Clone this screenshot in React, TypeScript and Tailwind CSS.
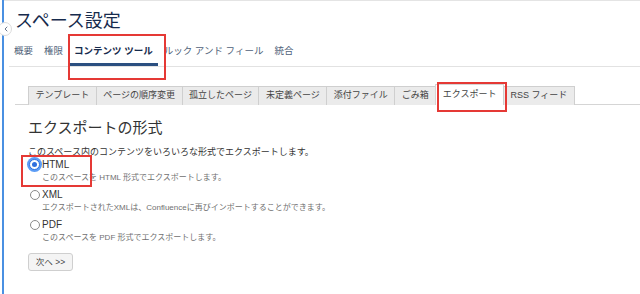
import { ChevronLeft } from "lucide-react"

const navItems = ["概要", "権限", "コンテンツ ツール", "ルック アンド フィール", "統合"]
const subTabs = ["テンプレート", "ページの順序変更", "孤立したページ", "未定義ページ", "添付ファイル", "ごみ箱", "エクスポート", "RSS フィード"]

const options = [
  { label: "HTML", desc: "このスペースを HTML 形式でエクスポートします。", checked: true },
  { label: "XML", desc: "エクスポートされたXMLは、Confluenceに再びインポートすることができます。", checked: false },
  { label: "PDF", desc: "このスペースを PDF 形式でエクスポートします。", checked: false },
]

function Radio({ checked }: { checked: boolean }) {
  if (checked) {
    return (
      <span className="flex h-[11px] w-[11px] items-center justify-center rounded-full border border-[#2f6fde] bg-white ring-2 ring-[#5b9cf5]">
        <span className="h-[5px] w-[5px] rounded-full bg-[#2f6fde]" />
      </span>
    )
  }
  return <span className="block h-[10px] w-[10px] rounded-full border border-[#8a8a8a] bg-white" />
}

export default function App() {
  return (
    <div className="relative flex h-[294px] w-[640px] overflow-hidden bg-white font-['Liberation_Sans','Noto_Sans_CJK_JP',sans-serif] text-[#333]">
      <div className="w-[2px] shrink-0" />
      <div className="w-[2px] shrink-0 bg-[#4a90e2]" />
      <div className="flex-1 border-t border-[#e4e4e4] pl-[11px] pt-[9px]">
        <h1 className="text-[18px] leading-[22px] text-[#172b4d]">スペース設定</h1>

        <div className="mt-[4px] flex gap-[1px] border-b border-[#e2e2e2] -ml-[6px]">
          {navItems.map((item) => {
            const active = item === "コンテンツ ツール"
            return (
              <div
                key={item}
                className={`flex h-[30px] items-center border-b-[3px] px-[5px] pt-[3px] text-[9.5px] ${
                  active ? "border-[#2b4f80] font-bold text-[#172b4d]" : "border-transparent text-[#505f79]"
                }`}
              >
                {item}
              </div>
            )
          })}
        </div>

        <div className="mt-[17px] flex items-end border-b border-[#d5d5d5] pl-[13px]">
          {subTabs.map((tab, i) => {
            const active = tab === "エクスポート"
            return (
              <div
                key={tab}
                className={`-mb-px flex items-center border border-b-0 px-[6.5px] text-[9px] text-[#444] ${
                  i > 0 ? "-ml-px" : ""
                } ${active ? "h-[21px] border-[#d5d5d5] bg-white" : "h-[19px] border-[#cfcfcf] bg-[#ebebeb]"}`}
              >
                {tab}
              </div>
            )
          })}
        </div>

        <div className="pl-[13px]">
          <h2 className="mt-[13px] text-[15px] leading-[20px] text-[#333]">エクスポートの形式</h2>
          <p className="mt-[8px] text-[9px] leading-[12px] text-[#333]">
            このスペース内のコンテンツをいろいろな形式でエクスポートします。
          </p>

          <div className="flex flex-col">
            {options.map((o) => (
              <div key={o.label} className="flex h-[30px] items-start">
                <div className="flex h-[13px] w-[13px] items-center justify-center">
                  <Radio checked={o.checked} />
                </div>
                <div className="ml-[1px] flex flex-col">
                  <span className="text-[10px] leading-[13px] text-[#333]">{o.label}</span>
                  <span className="text-[8px] leading-[13px] text-[#707070]">{o.desc}</span>
                </div>
              </div>
            ))}
          </div>

          <button className="mt-[3px] h-[18px] w-[45px] rounded-[3px] border border-[#cfcfcf] bg-[#f4f4f4] text-[8.5px] text-[#444]">
            次へ &gt;&gt;
          </button>
        </div>
      </div>

      <div className="absolute left-[-2px] top-[22px] flex h-[14px] w-[14px] items-center justify-center rounded-full border border-[#dcdcdc] bg-white text-[#6b778c]">
        <ChevronLeft size={8} strokeWidth={3} className="ml-[2px]" />
      </div>

      <div className="absolute left-[68px] top-[34px] h-[46px] w-[98px] border-2 border-[#e53935]" />
      <div className="absolute left-[437px] top-[82px] h-[30px] w-[70px] border-2 border-[#e53935]" />
      <div className="absolute left-[21px] top-[155px] h-[32px] w-[71px] border-2 border-[#e53935]" />
    </div>
  )
}
